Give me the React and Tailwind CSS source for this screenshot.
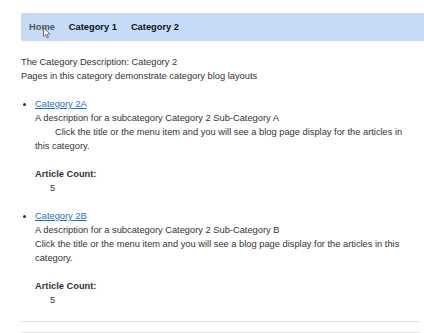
export default function App() {
  const font = { fontFamily: '"Liberation Sans", Arial, sans-serif' };
  return (
    <div className="w-[424px] h-[333px] overflow-hidden bg-white text-[9.3px] leading-[14px] text-[#333]" style={font}>
      <div className="pt-[13px] pl-[21px]">
        <div className="relative h-[28px] bg-[#c6dbf8] flex items-center pl-[8px] gap-[14px] font-bold text-[9.3px]">
          <span className="text-[#555]">Home</span>
          <span className="text-[#111]">Category 1</span>
          <span className="text-[#111]">Category 2</span>
          <svg className="absolute left-[22px] top-[14px]" width="8" height="12" viewBox="0 0 8 12">
            <path d="M0.5 0.5 L0.5 9.5 L2.6 7.6 L4 11 L5.4 10.4 L4 7.2 L7 7.2 Z" fill="#fff" stroke="#555" strokeWidth="0.8" />
          </svg>
        </div>
        <div className="mt-[14px] pr-[4px]">
          <div className="pr-[14px]">
            <p>The Category Description: Category 2</p>
            <p>Pages in this category demonstrate category blog layouts</p>
            <ul className="mt-[14px] list-disc pl-[14px]">
              <li>
                <a className="text-[#1a6ed8] underline">Category 2A</a>
                <p>A description for a subcategory Category 2 Sub-Category A</p>
                <p><span className="inline-block w-[20px]"></span>Click the title or the menu item and you will see a blog page display for the articles in this category.</p>
                <dl className="mt-[14px]">
                  <dt className="font-bold">Article Count:</dt>
                  <dd className="pl-[15px]">5</dd>
                </dl>
              </li>
              <li className="mt-[14px]">
                <a className="text-[#1a6ed8] underline">Category 2B</a>
                <p>A description for a subcategory Category 2 Sub-Category B</p>
                <p>Click the title or the menu item and you will see a blog page display for the articles in this category.</p>
                <dl className="mt-[14px]">
                  <dt className="font-bold">Article Count:</dt>
                  <dd className="pl-[15px]">5</dd>
                </dl>
              </li>
            </ul>
          </div>
          <div className="mt-[14px] border-t border-[#e2e2e2]"></div>
          <div className="mt-[10px] border-t border-[#e2e2e2]"></div>
        </div>
      </div>
    </div>
  );
}
